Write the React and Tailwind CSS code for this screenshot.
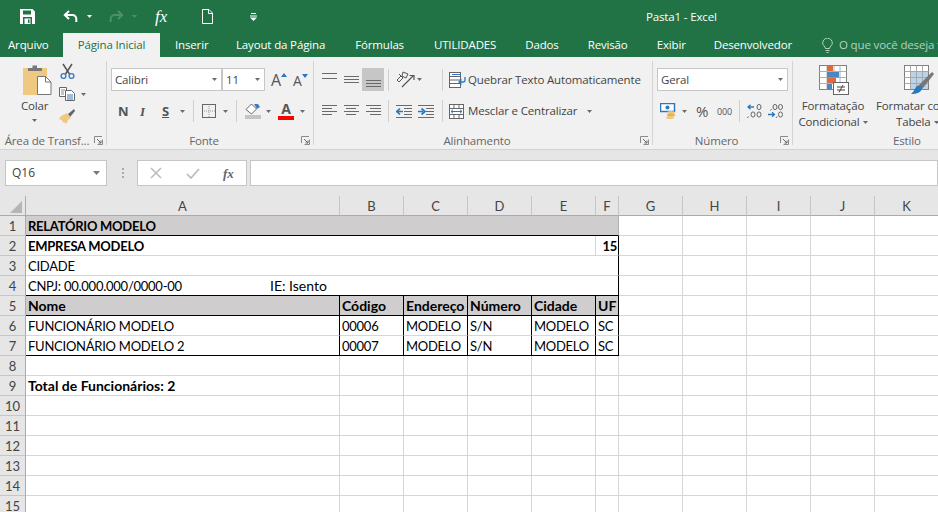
const Caret = ({ c = "#6b6b6b", className = "", w = 5, h = 3 }) => (
  <svg width={w} height={h} viewBox="0 0 7 4" preserveAspectRatio="none" className={"shrink-0 " + className}><path d="M0 0h7L3.5 4z" fill={c} /></svg>
);

const Launcher = () => (
  <svg width="9" height="9" viewBox="0 0 9 9" className="shrink-0">
    <path d="M.5 7V.5H8M3.5 8.5h5v-5" fill="none" stroke="#8a8a8a" />
    <path d="M3 3l4 4M7 4.5V7H4.5" fill="none" stroke="#6a6a6a" />
  </svg>
);

const Lines = ({ rows, w = 15, h = 14, className = "" }) => (
  <svg width={w} height={h} viewBox={`0 0 ${w} ${h}`} className={"shrink-0 " + className}>
    {rows.map(([a, b, y], i) => <path key={i} d={`M${a} ${y + .5}H${b}`} stroke="#6a6a6a" />)}
  </svg>
);

const Save = () => (
  <svg width="15" height="15" viewBox="0 0 15 15" className="shrink-0">
    <path d="M0 0h12.5L15 2.5V15H0z" fill="#fff" />
    <rect x="3" y="1.5" width="8" height="4" fill="#217346" />
    <rect x="3" y="8" width="9" height="7" fill="#217346" />
    <rect x="4.5" y="9.5" width="6" height="5.5" fill="#fff" />
    <rect x="8" y="10.5" width="1.5" height="3.5" fill="#217346" />
  </svg>
);

const Undo = ({ c = "#fff", className = "" }) => (
  <svg width="15" height="13" viewBox="0 0 15 13" className={"shrink-0 " + className}>
    <path d="M6 1L1.8 5 6 9" fill="none" stroke={c} strokeWidth="2" />
    <path d="M2 5h7.5a3.8 3.8 0 0 1 3.8 3.8V12" fill="none" stroke={c} strokeWidth="2" />
  </svg>
);

const Doc = () => (
  <svg width="11" height="15" viewBox="0 0 11 15" className="shrink-0">
    <path d="M.5.5h6.5L10.5 4v10.5H.5z" fill="#217346" stroke="#fff" />
    <path d="M6.5.5V4.5h4" fill="none" stroke="#fff" />
  </svg>
);

const Qat = () => (
  <svg width="7" height="8" viewBox="0 0 7 8" className="shrink-0">
    <path d="M1 .5h5M0 3h7" stroke="#fff" />
    <path d="M0 4.5h7L3.5 8z" fill="#fff" />
  </svg>
);

const Paste = () => (
  <svg width="30" height="30" viewBox="0 0 30 30" className="shrink-0">
    <rect x="0" y="3" width="24" height="27" fill="#efc882" />
    <path d="M5 6V3h4.5V.5h4.5V3h5v3z" fill="#777" />
    <path d="M14.5 11.5h8l5.5 5.5v12.5H14.5z" fill="#fff" stroke="#777" />
    <path d="M22.5 11.5V17h5.5" fill="none" stroke="#777" />
  </svg>
);

const Scissors = () => (
  <svg width="15" height="16" viewBox="0 0 15 16" className="shrink-0">
    <path d="M3 1l6.5 10M12 1L5.5 11" stroke="#555" strokeWidth="1.5" />
    <circle cx="3.5" cy="13" r="2.4" fill="none" stroke="#3b7cc0" strokeWidth="1.4" />
    <circle cx="11.5" cy="13" r="2.4" fill="none" stroke="#3b7cc0" strokeWidth="1.4" />
  </svg>
);

const Copy = () => (
  <svg width="16" height="14" viewBox="0 0 16 14" className="shrink-0">
    <path d="M.5.5h7v9h-7z" fill="#fff" stroke="#666" />
    <path d="M6.5 3.5h6l3 3v7h-9z" fill="#fff" stroke="#666" />
    <path d="M8 8h6M8 10h6M8 12h6" stroke="#3b7cc0" />
    <path d="M2 3h4M2 5h3M2 7h3" stroke="#888" />
  </svg>
);

const Brush = () => (
  <svg width="16" height="15" viewBox="0 0 16 15" className="shrink-0">
    <path d="M9 5L15 0l1 2-5 6z" fill="#666" />
    <path d="M8 4l4 5-3 2-2 4-2-2-1 1-1-3-3-1 2-3z" fill="#efc882" />
  </svg>
);

const Borders = () => (
  <svg width="14" height="14" viewBox="0 0 14 14" className="shrink-0">
    <rect x=".5" y=".5" width="13" height="13" fill="none" stroke="#666" />
    <path d="M7 2v11M2 7h11" stroke="#999" strokeDasharray="1 1" />
  </svg>
);

const Fill = () => (
  <svg width="16" height="16" viewBox="0 0 16 16" className="shrink-0">
    <path d="M1 6.5L6.5 1l5 5-5 5z" fill="#fff" stroke="#666" />
    <path d="M9 1h4l2 3-3 2z" fill="#3b7cc0" />
    <rect y="12" width="16" height="4" fill="#c4c4c4" />
  </svg>
);

const Orient = () => (
  <svg width="20" height="17" viewBox="0 0 20 17" className="shrink-0">
    <path d="M1 9l4-4 2 2-4 4zM5 5L3 3" fill="none" stroke="#555" />
    <path d="M7 1l5 2-2 4-4-2z" fill="none" stroke="#555" />
    <path d="M6 16L17 5M13.5 4.5H18V9" fill="none" stroke="#555" strokeWidth="1.2" />
  </svg>
);

const Indent = ({ flip }) => (
  <svg width="16" height="13" viewBox="0 0 16 13" className="shrink-0">
    <path d="M0 .5h16M8 3.5h8M8 6.5h8M8 9.5h8M0 12.5h16" stroke="#6a6a6a" />
    {flip
      ? <path d="M0 6.5h5M3.5 3.5L7 6.5 3.5 9.5" fill="none" stroke="#2b78bd" strokeWidth="1.7" />
      : <path d="M7 6.5H2M4 3.5L.8 6.5 4 9.5" fill="none" stroke="#2b78bd" strokeWidth="1.7" />}
  </svg>
);

const Wrap = () => (
  <svg width="17" height="16" viewBox="0 0 17 16" className="shrink-0">
    <rect x=".5" y=".5" width="11" height="15" fill="#fff" stroke="#666" />
    <path d="M.5 4.5h11M.5 8h11M.5 11.5h11" stroke="#666" />
    <path d="M3 2.5h9" stroke="#2b78bd" />
    <path d="M10 10h4a2 2 0 0 0 2-2V5M12.5 7.5L10 10l2.5 2.5" fill="none" stroke="#2b78bd" strokeWidth="1.3" />
  </svg>
);

const Merge = () => (
  <svg width="15" height="15" viewBox="0 0 15 15" className="shrink-0">
    <rect x=".5" y=".5" width="14" height="14" fill="#fff" stroke="#666" />
    <path d="M.5 4.5h14M.5 10.5h14M5 .5v4M10 .5v4M5 10.5v4M10 10.5v4" stroke="#666" />
    <path d="M2 7.5h11M4 5.8L2 7.5l2 1.7M11 5.8l2 1.7-2 1.7" fill="none" stroke="#2b78bd" />
  </svg>
);

const Money = () => (
  <svg width="17" height="16" viewBox="0 0 17 16" className="shrink-0">
    <rect x=".5" y=".5" width="14" height="8" fill="#fff" stroke="#2b78bd" strokeWidth="1.5" />
    <circle cx="7.5" cy="4.5" r="2" fill="#2b78bd" />
    <ellipse cx="11" cy="9.5" rx="4" ry="1.5" fill="#efc882" />
    <ellipse cx="11" cy="12" rx="4" ry="1.5" fill="#e3b056" />
    <ellipse cx="10" cy="14.5" rx="4" ry="1.5" fill="#efc882" />
  </svg>
);

const DecInc = () => (
  <svg width="15" height="14" viewBox="0 0 15 14" className="shrink-0">
    <path d="M7 3H1.5M3.5 .8L1 3l2.5 2.2" fill="none" stroke="#2b78bd" strokeWidth="1.3" />
    <ellipse cx="12" cy="3" rx="2" ry="2.6" fill="none" stroke="#666" />
    <path d="M1.5 12.5l-1 1.5" stroke="#666" />
    <ellipse cx="6" cy="10.5" rx="2" ry="2.6" fill="none" stroke="#666" />
    <ellipse cx="12" cy="10.5" rx="2" ry="2.6" fill="none" stroke="#666" />
  </svg>
);

const DecDec = () => (
  <svg width="15" height="14" viewBox="0 0 15 14" className="shrink-0">
    <path d="M3.5 5l-1 1.5" stroke="#666" />
    <ellipse cx="7" cy="3" rx="2" ry="2.6" fill="none" stroke="#666" />
    <ellipse cx="12.5" cy="3" rx="2" ry="2.6" fill="none" stroke="#666" />
    <path d="M0 10.5h6.5M4 8.2l2.5 2.3L4 12.8" fill="none" stroke="#2b78bd" strokeWidth="1.3" />
    <path d="M9 12.5l-1 1.5" stroke="#666" />
    <ellipse cx="12.5" cy="10.5" rx="2" ry="2.6" fill="none" stroke="#666" />
  </svg>
);

const CondFormat = () => (
  <svg width="30" height="30" viewBox="0 0 30 30" className="shrink-0">
    <rect x=".5" y=".5" width="27" height="24" fill="#fff" stroke="#808080" />
    <path d="M.5 6.5h27M.5 12.5h27M.5 18.5h27M8 .5v24M15 .5v24M21 .5v24" stroke="#b0b0b0" />
    <rect x="8" y="1" width="6" height="5" fill="#df6a3e" />
    <rect x="8" y="7" width="12" height="5.5" fill="#4a86c2" />
    <rect x="8" y="13" width="9" height="5" fill="#df6a3e" />
    <rect x="8" y="19" width="5" height="5.5" fill="#4a86c2" />
    <rect x="14.5" y="17.5" width="15" height="12" fill="#fff" stroke="#666" />
    <path d="M18 22h8M18 25h8M24 20l-4 7.5" stroke="#444" />
  </svg>
);

const TableFormat = () => (
  <svg width="30" height="30" viewBox="0 0 30 30" className="shrink-0">
    <rect x=".5" y=".5" width="24" height="24" fill="#fff" stroke="#808080" />
    <rect x="6" y="7" width="18" height="17" fill="#bcd2e8" />
    <path d="M.5 6.5h24M.5 12.5h24M.5 18.5h24M6.5 .5v24M12.5 .5v24M18.5 .5v24" stroke="#a8a8a8" />
    <path d="M15 20L28 7l2 2-11 14z" fill="#777" />
    <path d="M13 21c3-2 6 0 5 3-1 3-5 5-11 5 3-2 3-5 6-8z" fill="#2b78bd" />
  </svg>
);

const Bulb = () => (
  <svg width="11" height="15" viewBox="0 0 11 15" className="shrink-0">
    <path d="M3.5 10.5C3 8 .7 7.5.7 5a4.8 4.8 0 0 1 9.6 0c0 2.5-2.3 3-2.8 5.5z" fill="none" stroke="#b5d0c0" />
    <path d="M3.5 12.5h4M4.5 14.5h2" stroke="#b5d0c0" />
  </svg>
);

const Group = ({ label, launcher, className, children }) => (
  <section className={"h-[84px] my-1 border-r border-[#d4d4d4] shrink-0 flex flex-col " + className}>
    <div className="flex-1 min-h-0">{children}</div>
    <div className="h-[12px] flex items-center justify-between text-[11.5px] text-[#666] leading-none">
      <span className="flex-1 text-center whitespace-nowrap translate-y-[2px]">{label}</span>
      {launcher && <span className="mr-[3px] translate-y-[1px]"><Launcher /></span>}
    </div>
  </section>
);

const Select = ({ text, className, caretClass = "mr-[4px]" }) => (
  <div className={"h-[23px] bg-white border border-[#c6c6c6] flex items-center justify-between text-[11.5px] text-[#444] pl-[3px] " + className}>
    <span>{text}</span>
    <Caret className={caretClass} />
  </div>
);

const VSep = ({ className = "" }) => <div className={"w-px h-[22px] bg-[#d0d0d0] shrink-0 " + className} />;

const tabs = [
  ["Layout da Página", "ml-[29px]"],
  ["Fórmulas", "ml-[30px]"],
  ["UTILIDADES", "ml-[30px]"],
  ["Dados", "ml-[29px]"],
  ["Revisão", "ml-[29px]"],
  ["Exibir", "ml-[29px]"],
  ["Desenvolvedor", "ml-[28px]"],
];

const TabBar = () => (
  <div className="h-6 bg-[#217346] flex items-center text-white text-[11.5px] tracking-[-0.15px] whitespace-nowrap overflow-hidden">
    <span className="ml-2 w-[55px] shrink-0">Arquivo</span>
    <div className="w-[97px] h-6 shrink-0 bg-[#f1f1f1] text-[#217346] flex items-center justify-center">Página Inicial</div>
    <span className="ml-[15px] w-[32px] shrink-0">Inserir</span>
    {tabs.map(([t, m]) => <span key={t} className={m + " shrink-0"}>{t}</span>)}
    <span className="ml-[30px] mr-[6px] shrink-0"><Bulb /></span>
    <span className="text-[#b5d0c0] shrink-0">O que você deseja fazer?</span>
  </div>
);

const TitleBar = () => (
  <div className="h-[33px] bg-[#217346] flex items-center text-white whitespace-nowrap">
    <div className="ml-5"><Save /></div>
    <div className="ml-[28px]"><Undo /></div>
    <Caret c="#fff" className="ml-[9px]" />
    <div className="ml-[17px]"><Undo c="#4c8f6a" className="-scale-x-100" /></div>
    <Caret c="#4c8f6a" className="ml-[8px]" />
    <span className="ml-[18px] w-[13px] font-['Liberation_Serif',serif] italic text-[17px] leading-none">fx</span>
    <div className="ml-[34px]"><Doc /></div>
    <div className="ml-[37px]"><Qat /></div>
    <span className="ml-[389px] mt-[1px] text-[11.5px] tracking-[-0.15px]">Pasta1 - Excel</span>
  </div>
);

const Clipboard = () => (
  <Group label="Área de Transf..." launcher className="w-[107px]">
    <div className="flex pt-[2px]">
      <div className="w-[59px] pl-[21px] flex flex-col items-start">
        <div className="ml-[2px] mt-[2px]"><Paste /></div>
        <span className="mt-[3px] text-[11.5px] text-[#444] leading-[16px]">Colar</span>
        <Caret className="ml-[11px] mt-[5px]" />
      </div>
      <div className="flex flex-col items-start">
        <div className="ml-[1px]"><Scissors /></div>
        <div className="mt-[8px] flex items-center">
          <Copy /><Caret className="ml-[6px]" />
        </div>
        <div className="mt-[8px]"><Brush /></div>
      </div>
    </div>
  </Group>
);

const Font = () => (
  <Group label="Fonte" launcher className="w-[207px]">
    <div className="pt-[7px] pl-[4px]">
      <div className="flex items-center">
        <Select text="Calibri" className="w-[111px]" />
        <Select text="11" className="w-[43px]" />
        <span className="ml-[6px] text-[16px] text-[#555] leading-none flex items-start">A<svg width="6" height="4" viewBox="0 0 6 4" className="mt-[1px]"><path d="M0 4l3-4 3 4z" fill="#2b78bd" /></svg></span>
        <span className="ml-[6px] text-[14px] text-[#555] leading-none flex items-start mt-[2px]">A<svg width="6" height="4" viewBox="0 0 6 4"><path d="M0 0l3 4 3-4z" fill="#2b78bd" /></svg></span>
      </div>
      <div className="flex items-center mt-[9px] h-[22px] text-[#555]">
        <span className="ml-[7px] w-[22px] text-[13px] font-bold leading-none">N</span>
        <span className="w-[22px] text-[13px] italic font-semibold font-['Liberation_Serif',serif] leading-none">I</span>
        <span className="w-[18px] text-[13px] font-bold underline leading-none">S</span>
        <Caret />
        <VSep className="ml-[8px]" />
        <div className="ml-[8px]"><Borders /></div>
        <Caret className="ml-[7px]" />
        <VSep className="ml-[8px]" />
        <div className="ml-[8px]"><Fill /></div>
        <Caret className="ml-[5px]" />
        <div className="ml-[7px] w-[16px] flex flex-col items-center">
          <span className="text-[14px] font-bold leading-[14px]">A</span>
          <div className="w-[16px] h-[4px] bg-[#ff0000]" />
        </div>
        <Caret className="ml-[6px]" />
      </div>
    </div>
  </Group>
);

const Align = () => (
  <Group label="Alinhamento" launcher className="w-[339px]">
    <div className="pt-[7px] pl-[8px] text-[11.5px] text-[#444] whitespace-nowrap">
      <div className="flex items-center h-[23px]">
        <Lines rows={[[0, 15, 0], [0, 15, 5]]} />
        <Lines rows={[[0, 15, 3], [0, 15, 6], [0, 15, 9]]} className="ml-[7px]" />
        <div className="ml-[3px] w-[22px] h-[23px] bg-[#c6c6c6] flex items-end justify-center pb-[4px]">
          <Lines rows={[[0, 15, 7], [0, 15, 10], [0, 15, 13]]} />
        </div>
        <VSep className="ml-[4px]" />
        <div className="ml-[7px]"><Orient /></div>
        <Caret className="ml-[1px]" />
        <VSep className="ml-[20px]" />
        <div className="ml-[6px]"><Wrap /></div>
        <span className="ml-[2px]">Quebrar Texto Automaticamente</span>
      </div>
      <div className="flex items-center h-[22px] mt-[9px]">
        <Lines rows={[[0, 15, 1], [0, 10, 4], [0, 15, 7], [0, 10, 10]]} />
        <Lines rows={[[0, 15, 1], [2, 12, 4], [0, 15, 7], [2, 12, 10]]} className="ml-[7px]" />
        <Lines rows={[[0, 15, 1], [4, 15, 4], [0, 15, 7], [4, 15, 10]]} className="ml-[7px]" />
        <VSep className="ml-[7px]" />
        <div className="ml-[7px]"><Indent /></div>
        <div className="ml-[6px]"><Indent flip /></div>
        <VSep className="ml-[8px]" />
        <div className="ml-[6px]"><Merge /></div>
        <span className="ml-[4px]">Mesclar e Centralizar</span>
        <Caret className="ml-[10px]" />
      </div>
    </div>
  </Group>
);

const Numero = () => (
  <Group label="Número" launcher className="w-[140px]">
    <div className="pt-[7px] pl-[4px]">
      <Select text="Geral" className="w-[131px]" />
      <div className="flex items-center h-[22px] mt-[9px] text-[#555]">
        <div className="ml-[3px]"><Money /></div>
        <Caret className="ml-[5px]" />
        <span className="ml-[9px] text-[15px] w-[15px] leading-none">%</span>
        <span className="ml-[6px] text-[9px] w-[15px] leading-none">000</span>
        <VSep className="ml-[7px]" />
        <div className="ml-[7px]"><DecInc /></div>
        <div className="ml-[6px]"><DecDec /></div>
      </div>
    </div>
  </Group>
);

const Estilo = () => (
  <section className="h-[84px] my-1 flex-1 min-w-0 flex flex-col text-[11.5px] text-[#444] whitespace-nowrap">
    <div className="flex-1 flex min-h-0 overflow-hidden">
      <div className="w-[80px] shrink-0 flex flex-col items-center leading-[16px]">
        <div className="h-[35px] pt-[4px] ml-[1px]"><CondFormat /></div>
        <span className="mt-[2px]">Formatação</span>
        <span className="flex items-center gap-[3px]">Condicional<Caret /></span>
      </div>
      <div className="w-[75px] shrink-0 ml-[3px] flex flex-col leading-[16px]">
        <div className="h-[35px] pt-[4px] ml-[28px]"><TableFormat /></div>
        <span className="mt-[2px]">Formatar como</span>
        <span className="ml-[20px] flex items-center gap-[3px]">Tabela<Caret /></span>
      </div>
    </div>
    <div className="h-[12px] text-[#666] leading-none pl-[100px] translate-y-[2px]">Estilo</div>
  </section>
);

const Ribbon = () => (
  <div className="h-[93px] bg-[#f1f1f1] border-b border-[#d2d2d2] flex tracking-[-0.15px] font-['Open_Sans',sans-serif]">
    <Clipboard />
    <Font />
    <Align />
    <Numero />
    <Estilo />
  </div>
);

const FormulaBar = () => (
  <div className="h-[46px] bg-[#e6e6e6] flex items-start pt-[10px] pl-[5px] text-[#444] text-[12px]">
    <div className="w-[102px] h-[26px] bg-white border border-[#c6c6c6] flex items-center justify-between pl-[6px] pr-[6px]">
      <span>Q16</span><Caret c="#777" w={7} h={4} />
    </div>
    <div className="ml-[15px] w-[2px] h-[10px] mt-[8px] border-l-2 border-dotted border-[#aaa]" />
    <div className="ml-[13px] w-[110px] h-[26px] bg-white border border-[#c6c6c6] flex items-center">
      <svg width="12" height="12" viewBox="0 0 12 12" className="ml-[12px]"><path d="M1 1l10 10M11 1L1 11" stroke="#bbb" strokeWidth="1.5" /></svg>
      <svg width="14" height="11" viewBox="0 0 14 11" className="ml-[24px]"><path d="M1 6l4 4 8-9" fill="none" stroke="#bbb" strokeWidth="1.7" /></svg>
      <span className="ml-[23px] font-['Liberation_Serif',serif] italic font-bold text-[#666] text-[13px] leading-none">fx</span>
    </div>
    <div className="ml-[3px] flex-1 h-[26px] bg-white border border-[#c6c6c6]" />
  </div>
);

const colLetters = ["A", "B", "C", "D", "E", "F", "G", "H", "I", "J", "K"];
const grid = "border-[#d6d6d6]";
const CAPS = "text-[13px] tracking-[-0.25px] ";
const MIX = "text-[14px] ";

const Cell = ({ className = "", children }) => (
  <div className={"h-5 pl-[2px] pt-[2px] flex items-center whitespace-nowrap overflow-hidden text-black border-r border-b " + className}>
    {children}
  </div>
);

const Blank = ({ n }) => Array.from({ length: n }, (_, i) => <Cell key={i} className={grid} />);

const RowHead = ({ n }) => (
  <div className="h-5 pt-[2px] bg-[#e6e6e6] border-r border-r-[#ababab] border-b border-b-[#c6c6c6] flex items-center justify-center text-[13px] text-[#444]">{n}</div>
);

const Sheet = () => (
  <div className="grid grid-cols-[26px_314px_64px_64px_64px_64px_23px_64px_64px_64px_64px_64px] font-['Lato',sans-serif]">
    <div className="h-5 bg-[#e6e6e6] border-r border-b border-[#ababab] flex items-end justify-end pr-[3px] pb-[2px]">
      <svg width="12" height="12" viewBox="0 0 12 12"><path d="M12 0v12H0z" fill="#b5b5b5" /></svg>
    </div>
    {colLetters.map((c) => (
      <div key={c} className="h-5 pt-[2px] bg-[#e6e6e6] border-r border-r-[#c6c6c6] border-b border-b-[#ababab] flex items-center justify-center text-[13px] text-[#444]">{c}</div>
    ))}

    <RowHead n={1} />
    <Cell className={CAPS + "col-span-6 bg-[#cfcdcd] font-bold border-b-black border-r-[#b0b0b0]"}>RELATÓRIO MODELO</Cell>
    <Blank n={5} />

    <RowHead n={2} />
    <Cell className={CAPS + "col-span-5 font-bold border-[#d6d6d6]"}>EMPRESA MODELO</Cell>
    <Cell className={CAPS + "font-bold justify-end pr-[1px] border-b-[#d6d6d6] border-r-black"}>15</Cell>
    <Blank n={5} />

    <RowHead n={3} />
    <Cell className={CAPS + "col-span-6 border-b-[#d6d6d6] border-r-black"}>CIDADE</Cell>
    <Blank n={5} />

    <RowHead n={4} />
    <Cell className={CAPS + "col-span-6 border-b-black border-r-black"}>
      <span className="w-[242px] shrink-0">CNPJ: 00.000.000/0000-00</span>
      <span className="text-[14px] tracking-normal -translate-y-[1px]">IE: Isento</span>
    </Cell>
    <Blank n={5} />

    <RowHead n={5} />
    {["Nome", "Código", "Endereço", "Número", "Cidade", "UF"].map((t) => (
      <Cell key={t} className={MIX + "bg-[#cfcdcd] font-bold border-black"}><span className="-translate-y-[1px]">{t}</span></Cell>
    ))}
    <Blank n={5} />

    <RowHead n={6} />
    {["FUNCIONÁRIO MODELO", "00006", "MODELO", "S/N", "MODELO", "SC"].map((t, i) => (
      <Cell key={i} className={CAPS + "border-r-black border-b-[#d6d6d6]"}>{t}</Cell>
    ))}
    <Blank n={5} />

    <RowHead n={7} />
    {["FUNCIONÁRIO MODELO 2", "00007", "MODELO", "S/N", "MODELO", "SC"].map((t, i) => (
      <Cell key={i} className={CAPS + "border-black"}>{t}</Cell>
    ))}
    <Blank n={5} />

    <RowHead n={8} />
    <Blank n={11} />

    <RowHead n={9} />
    <Cell className={MIX + "font-bold " + grid}><span className="-translate-y-[1px]">Total de Funcionários: 2</span></Cell>
    <Blank n={10} />

    {[10, 11, 12, 13, 14, 15].map((n) => [
      <RowHead key={"h" + n} n={n} />,
      <Blank key={"b" + n} n={11} />,
    ])}
  </div>
);

export default function App() {
  return (
    <div className="w-[938px] h-[512px] overflow-hidden bg-white font-['Open_Sans',sans-serif]">
      <TitleBar />
      <TabBar />
      <Ribbon />
      <FormulaBar />
      <Sheet />
    </div>
  );
}
